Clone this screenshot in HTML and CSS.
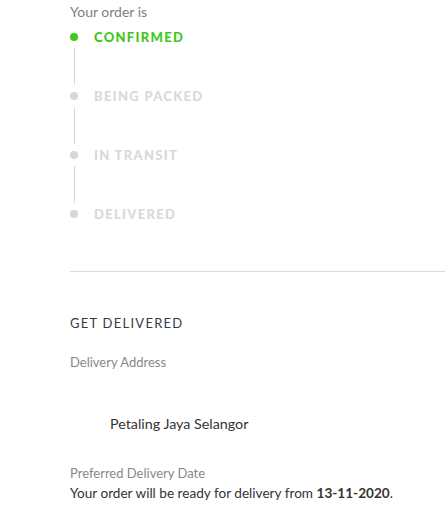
FILE: index.html
```html
<!DOCTYPE html>
<html>
<head>
<meta charset="utf-8">
<link rel="stylesheet" href="styles.css">
</head>
<body>
<div class="page">
  <div class="status">
    <div class="intro">Your order is</div>
    <ul class="timeline">
      <li class="step active"><span class="dot"></span><span class="label">CONFIRMED</span></li>
      <li class="connector"></li>
      <li class="step"><span class="dot"></span><span class="label">BEING PACKED</span></li>
      <li class="connector"></li>
      <li class="step"><span class="dot"></span><span class="label">IN TRANSIT</span></li>
      <li class="connector"></li>
      <li class="step"><span class="dot"></span><span class="label">DELIVERED</span></li>
    </ul>
  </div>
  <hr class="divider">
  <div class="delivery">
    <h2 class="heading">GET DELIVERED</h2>
    <div class="field-label first">Delivery Address</div>
    <div class="address">Petaling Jaya Selangor</div>
    <div class="field-label">Preferred Delivery Date</div>
    <div class="note">Your order will be ready for delivery from <b>13-11-2020</b>.</div>
  </div>
</div>
</body>
</html>
```

FILE: styles.css
```css
* { box-sizing: border-box; }
html, body { margin: 0; padding: 0; background: #fff; }
body {
  font-family: Lato, "Liberation Sans", sans-serif;
  color: #333;
  width: 445px;
  height: 514px;
  overflow: hidden;
}
.page { padding-left: 70px; }
.intro {
  font-size: 14px;
  line-height: 18px;
  color: #808080;
  padding-top: 3px;
}
.timeline {
  list-style: none;
  margin: 7px 0 0 0;
  padding: 0;
}
.step {
  display: flex;
  align-items: center;
  height: 18px;
}
.dot {
  width: 8px;
  height: 8px;
  border-radius: 50%;
  background: #d6d6d6;
  flex: none;
}
.label {
  margin-left: 16px;
  font-size: 13px;
  font-weight: 900;
  letter-spacing: 1.3px;
  color: #d9d9d9;
}
.step.active .dot { background: #42c61a; }
.step.active .label { color: #42c61a; }
.connector {
  width: 1px;
  height: 37px;
  margin: 2px 0 2px 4px;
  background: #d9d9d9;
}
.divider {
  border: 0;
  height: 1px;
  background: #dcdcdc;
  margin: 48px 0 0 0;
}
.delivery { padding-top: 42px; }
.heading {
  margin: 0;
  font-size: 13px;
  font-weight: 400;
  letter-spacing: 1.25px;
  line-height: 18px;
  color: #333c45;
}
.field-label {
  font-size: 13px;
  line-height: 16px;
  color: #888;
}
.first { margin-top: 22px; }
.address {
  font-size: 14.3px;
  line-height: 18px;
  color: #333;
  padding-left: 40px;
  margin-top: 45px;
  margin-bottom: 32px;
}
.note {
  font-size: 13.6px;
  line-height: 18px;
  color: #333;
  margin-top: 3px;
}
.note b { font-weight: 700; }
```
